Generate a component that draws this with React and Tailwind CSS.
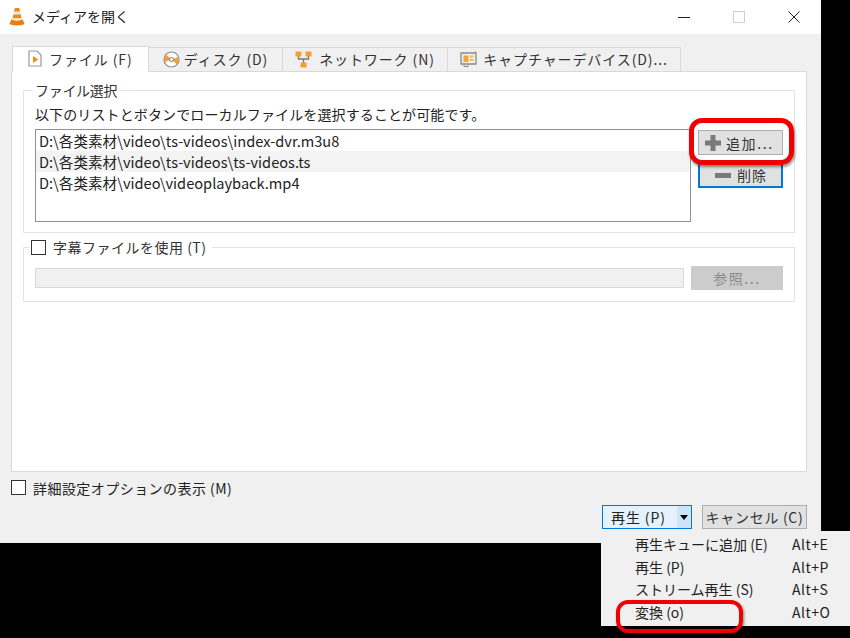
const font = { fontFamily: '"Noto Sans CJK JP", "Noto Sans", sans-serif' };

function Cone({ className }) {
  return (
    <svg viewBox="0 0 18 20" className={className}>
      <path d="M6.6 1 H11.4 L12.3 5 H5.7 Z" fill="#f08a10" />
      <path d="M5.7 5 H12.3 L12.9 8 H5.1 Z" fill="#e8e8e8" />
      <path d="M5.1 8 H12.9 L13.7 12 H4.3 Z" fill="#f08a10" />
      <path d="M4.3 12 H13.7 L14 13.5 H4 Z" fill="#e8e8e8" />
      <path d="M3.2 13 C5 15 13 15 14.8 13 L17 18 C15 20 3 20 1 18 Z" fill="#ea7d0c" />
    </svg>
  );
}

function FileIcon() {
  return (
    <svg viewBox="0 0 14 17" className="h-[17px] w-[14px] shrink-0">
      <path d="M1 1 H9 L13 5 V16 H1 Z" fill="#fff" stroke="#9a9a9a" strokeWidth="1.2" />
      <path d="M5 6 L10 9.5 L5 13 Z" fill="#f08a10" />
    </svg>
  );
}

function DiscIcon() {
  return (
    <svg viewBox="0 0 17 17" className="h-[17px] w-[17px] shrink-0">
      <circle cx="8.5" cy="8.5" r="7.5" fill="#fff" stroke="#8c8c8c" strokeWidth="1.2" />
      <path d="M8.5 8.5 L3 3.5 A7.5 7.5 0 0 0 2 11 Z" fill="#f0a040" />
      <path d="M8.5 8.5 L14 13.5 A7.5 7.5 0 0 0 15 6 Z" fill="#f0a040" />
      <circle cx="8.5" cy="8.5" r="2" fill="#fff" stroke="#777" />
    </svg>
  );
}

function NetIcon() {
  return (
    <svg viewBox="0 0 17 17" className="h-[17px] w-[17px] shrink-0">
      <path d="M3.5 5 V8 H13.5 V5 M8.5 8 V12" fill="none" stroke="#777" strokeWidth="1.3" />
      <rect x="0.5" y="0.5" width="6" height="5" fill="#f0a030" />
      <rect x="10.5" y="0.5" width="6" height="5" fill="#f0a030" />
      <rect x="5.5" y="11.5" width="6" height="5" fill="#f0a030" />
    </svg>
  );
}

function CaptureIcon() {
  return (
    <svg viewBox="0 0 17 16" className="h-[16px] w-[17px] shrink-0">
      <path d="M1 2 H16 V13 H1 Z" fill="#efefef" stroke="#8a8a8a" strokeWidth="1.3" />
      <rect x="3.5" y="4.5" width="5" height="6.5" fill="#f2a43a" />
      <rect x="10" y="4.5" width="3.5" height="2" fill="#f2c040" />
      <rect x="10" y="8" width="3.5" height="2" fill="#f2c040" />
      <path d="M15 0.5 L16.5 2 M4 13.5 V15.5 H8 V13.5" stroke="#8a8a8a" fill="none" />
    </svg>
  );
}

function Tab({ icon, label, active, width, gap }) {
  return (
    <div
      className={
        active
          ? "relative z-10 -mb-px flex h-[26px] items-center border border-b-0 border-[#d9d9d9] bg-white pb-[2px] pl-[15px]"
          : "flex h-[24px] items-center border border-l-0 border-b-0 border-[#d9d9d9] bg-[#f0f0f0] pb-[1px]"
      }
      style={{ width }}
    >
      <div className={active ? "flex items-center" : "flex w-full items-center justify-center"} style={{ gap }}>
        {icon}
        <span className="text-[14px] leading-none tracking-[0.9px] text-[#333] whitespace-nowrap">{label}</span>
      </div>
    </div>
  );
}

function Check() {
  return <span className="block h-[15px] w-[15px] shrink-0 border border-[#333] bg-white" />;
}

function MenuRow({ label, keys }) {
  return (
    <div className="flex h-[22.5px] items-center pl-[34px] text-[14px] leading-none text-[#222]">
      <span className="w-[157px] whitespace-nowrap">{label}</span>
      <span className="whitespace-nowrap tracking-[0.5px]">{keys}</span>
    </div>
  );
}

export default function App() {
  return (
    <div className="relative h-[638px] w-[850px] overflow-hidden bg-black" style={font}>
      <div className="flex h-[543px] w-[821px] flex-col bg-[#f0f0f0]">
        {/* title bar */}
        <div className="flex h-[34px] shrink-0 items-center bg-white">
          <Cone className="mb-[1px] ml-[8px] h-[19px] w-[18px]" />
          <span className="mb-[2px] ml-[6px] text-[14px] leading-none text-[#222]">メディアを開く</span>
          <div className="ml-auto flex items-center pr-[21px]">
            <span className="block h-px w-[12px] bg-[#222]" />
            <span className="ml-[43px] block h-[12px] w-[12px] border border-[#cfcfcf]" />
            <svg viewBox="0 0 12 12" className="ml-[43px] h-[12px] w-[12px]">
              <path d="M0.5 0.5 L11.5 11.5 M11.5 0.5 L0.5 11.5" stroke="#222" strokeWidth="1" fill="none" />
            </svg>
          </div>
        </div>

        {/* tabs */}
        <div className="ml-[12px] mt-[12px] flex h-[25px] items-end">
          <Tab active width={137} gap={7} icon={<FileIcon />} label="ファイル (F)" />
          <Tab width={134} gap={4} icon={<DiscIcon />} label="ディスク (D)" />
          <Tab width={165} gap={7} icon={<NetIcon />} label="ネットワーク (N)" />
          <Tab width={233} gap={6} icon={<CaptureIcon />} label="キャプチャーデバイス(D)..." />
        </div>

        {/* panel */}
        <div className="ml-[11px] h-[401px] w-[796px] border border-[#d9d9d9] bg-white px-[11px] pt-[10px]">
          <fieldset className="h-[151px] border border-[#e3e3e3] px-[11px]">
            <legend className="-ml-[2px] px-[2px] text-[14px] leading-[16px] tracking-[-0.3px] text-[#333]">ファイル選択</legend>
            <p className="mt-[5px] h-[26px] text-[14px] leading-[22px] tracking-[0.12px] whitespace-nowrap text-[#222]">
              以下のリストとボタンでローカルファイルを選択することが可能です。
            </p>
            <div className="flex">
              <div className="h-[93px] w-[656px] border border-[#8f8f96] bg-white text-[14.6px] leading-[21px] text-[#222]">
                <div className="pl-[3px]">D:\各类素材\video\ts-videos\index-dvr.m3u8</div>
                <div className="bg-[#f3f3f3] pl-[3px]">D:\各类素材\video\ts-videos\ts-videos.ts</div>
                <div className="pl-[3px]">D:\各类素材\video\videoplayback.mp4</div>
              </div>
              <div className="ml-[7px] flex w-[85px] flex-col">
                <div className="mt-px flex h-[25px] items-center border border-[#adadad] bg-[#e1e1e1] pl-[6px] text-[14px] leading-none tracking-[1.6px] text-[#333]">
                  <svg viewBox="0 0 16 16" className="h-[16px] w-[16px]">
                    <path d="M5.5 0 H10.5 V5.5 H16 V10.5 H10.5 V16 H5.5 V10.5 H0 V5.5 H5.5 Z" fill="#7a7a7a" />
                  </svg>
                  <span className="ml-[5px] whitespace-nowrap">追加...</span>
                </div>
                <div className="mt-[8px] flex h-[25px] items-center border-2 border-[#0078d7] bg-[#e1e1e1] pb-[1px] pl-[15px] text-[14px] leading-none tracking-[1px] text-[#333]">
                  <span className="block h-[5px] w-[16px] bg-[#7a7a7a]" />
                  <span className="ml-[6px]">削除</span>
                </div>
              </div>
            </div>
          </fieldset>

          <fieldset className="mt-[6px] h-[63px] border border-[#e3e3e3] px-[11px]">
            <legend className="-ml-[6px] flex items-center px-[2px] text-[14px] leading-[16px] tracking-[0.5px] text-[#333]">
              <Check />
              <span className="ml-[7px] mr-[3px]">字幕ファイルを使用 (T)</span>
            </legend>
            <div className="mt-[11px] flex items-center">
              <div className="h-[20px] w-[649px] border border-[#d9d9d9] bg-[#f0f0f0]" />
              <div className="ml-[7px] flex h-[24px] w-[92px] items-center justify-center bg-[#cccccc] text-[14px] leading-none tracking-[1.6px] text-[#8a8a8a]">
                参照...
              </div>
            </div>
          </fieldset>
        </div>

        {/* options */}
        <div className="ml-[11px] mt-[8px] flex items-center">
          <Check />
          <span className="ml-[7px] text-[14px] leading-none tracking-[0.45px] text-[#222]">詳細設定オプションの表示 (M)</span>
        </div>

        {/* bottom buttons */}
        <div className="ml-[602px] mt-[10px] flex">
          <div className="flex h-[24px] w-[90px] border border-[#0078d7] bg-[#e5f1fb]">
            <div className="flex flex-1 items-center pl-[8px] text-[14px] leading-none tracking-[0.9px] text-[#222]">再生 (P)</div>
            <div className="flex w-[14px] items-center justify-center bg-[#cce4f7]">
              <span className="block h-0 w-0 border-x-[4px] border-t-[5px] border-x-transparent border-t-black" />
            </div>
          </div>
          <div className="ml-[10px] flex h-[24px] w-[105px] items-center justify-center border border-[#adadad] bg-[#e1e1e1] text-[14px] leading-none tracking-[0.7px] whitespace-nowrap text-[#333]">
            キャンセル (C)
          </div>
        </div>
      </div>

      {/* dropdown menu */}
      <div className="absolute left-[601px] top-[531px] h-[95px] w-[249px] bg-[#f0f0f0] pt-[2px]">
        <MenuRow label="再生キューに追加 (E)" keys="Alt+E" />
        <MenuRow label="再生 (P)" keys="Alt+P" />
        <MenuRow label="ストリーム再生 (S)" keys="Alt+S" />
        <MenuRow label="変換 (o)" keys="Alt+O" />
      </div>

      {/* red annotations */}
      <div className="absolute left-[689px] top-[118px] h-[47px] w-[105px] rounded-[13px] border-[5px] border-[#f00000] shadow-[1px_2px_3px_rgba(0,0,0,0.45)]" />
      <div className="absolute left-[616px] top-[600px] h-[33px] w-[127px] rounded-[12px] border-[4px] border-[#f00000] shadow-[1px_2px_3px_rgba(0,0,0,0.45)]" />
    </div>
  );
}
